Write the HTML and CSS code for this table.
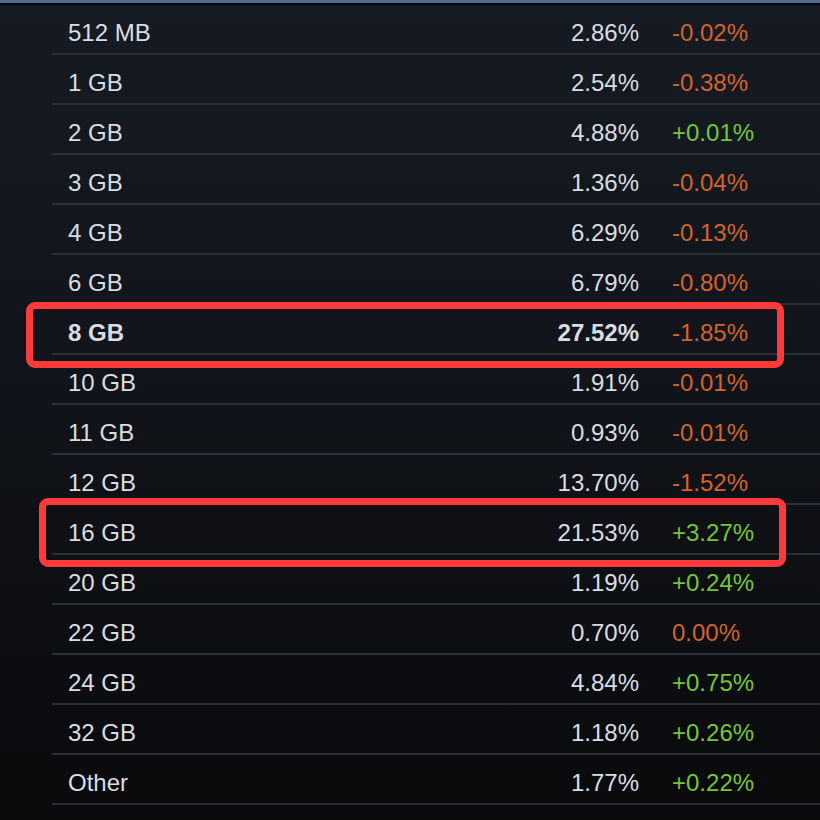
FILE: index.html
```html
<!DOCTYPE html>
<html>
<head>
<meta charset="utf-8">
<link rel="stylesheet" href="styles.css">
</head>
<body>
<div class="topbar"></div>
<div class="table">
  <div class="row"><span class="label">512 MB</span><span class="pct">2.86%</span><span class="chg neg">-0.02%</span></div>
  <div class="row"><span class="label">1 GB</span><span class="pct">2.54%</span><span class="chg neg">-0.38%</span></div>
  <div class="row"><span class="label">2 GB</span><span class="pct">4.88%</span><span class="chg pos">+0.01%</span></div>
  <div class="row"><span class="label">3 GB</span><span class="pct">1.36%</span><span class="chg neg">-0.04%</span></div>
  <div class="row"><span class="label">4 GB</span><span class="pct">6.29%</span><span class="chg neg">-0.13%</span></div>
  <div class="row"><span class="label">6 GB</span><span class="pct">6.79%</span><span class="chg neg">-0.80%</span></div>
  <div class="row bold"><span class="label">8 GB</span><span class="pct">27.52%</span><span class="chg neg">-1.85%</span></div>
  <div class="row"><span class="label">10 GB</span><span class="pct">1.91%</span><span class="chg neg">-0.01%</span></div>
  <div class="row"><span class="label">11 GB</span><span class="pct">0.93%</span><span class="chg neg">-0.01%</span></div>
  <div class="row"><span class="label">12 GB</span><span class="pct">13.70%</span><span class="chg neg">-1.52%</span></div>
  <div class="row"><span class="label">16 GB</span><span class="pct">21.53%</span><span class="chg pos">+3.27%</span></div>
  <div class="row"><span class="label">20 GB</span><span class="pct">1.19%</span><span class="chg pos">+0.24%</span></div>
  <div class="row"><span class="label">22 GB</span><span class="pct">0.70%</span><span class="chg neg">0.00%</span></div>
  <div class="row"><span class="label">24 GB</span><span class="pct">4.84%</span><span class="chg pos">+0.75%</span></div>
  <div class="row"><span class="label">32 GB</span><span class="pct">1.18%</span><span class="chg pos">+0.26%</span></div>
  <div class="row"><span class="label">Other</span><span class="pct">1.77%</span><span class="chg pos">+0.22%</span></div>
</div>
<div class="mark mark-8"></div>
<div class="mark mark-16"></div>
</body>
</html>
```
FILE: styles.css
```css
html, body {
  margin: 0;
  padding: 0;
  height: 100%;
}
body {
  position: relative;
  width: 820px;
  height: 820px;
  overflow: hidden;
  background: linear-gradient(180deg, #161b23 0%, #11141a 45%, #0a0a0c 100%);
  font-family: "Liberation Sans", Arial, sans-serif;
  font-size: 24px;
  color: #d9dde2;
}
.topbar {
  height: 3px;
  background: #4d6b8c;
  border-bottom: 2px solid #05070a;
}
.table {
  margin-left: 52px;
}
.row {
  display: grid;
  grid-template-columns: 1fr 140px 148px;
  height: 48px;
  padding-left: 16px;
  border-bottom: 2px solid #2b2f36;
  box-sizing: content-box;
}
.row span {
  padding-top: 8px;
  line-height: 40px;
  white-space: nowrap;
}
.pct {
  text-align: right;
  padding-right: 33px;
}
.bold .label, .bold .pct {
  font-weight: bold;
}
.neg { color: #d2632c; }
.pos { color: #75c53a; }
.mark {
  position: absolute;
  border: 7px solid #ff3a3a;
  border-radius: 9px;
  box-sizing: border-box;
}
.mark-8 {
  left: 26px;
  top: 302px;
  width: 758px;
  height: 66px;
}
.mark-16 {
  left: 39px;
  top: 498px;
  width: 747px;
  height: 69px;
}
```
